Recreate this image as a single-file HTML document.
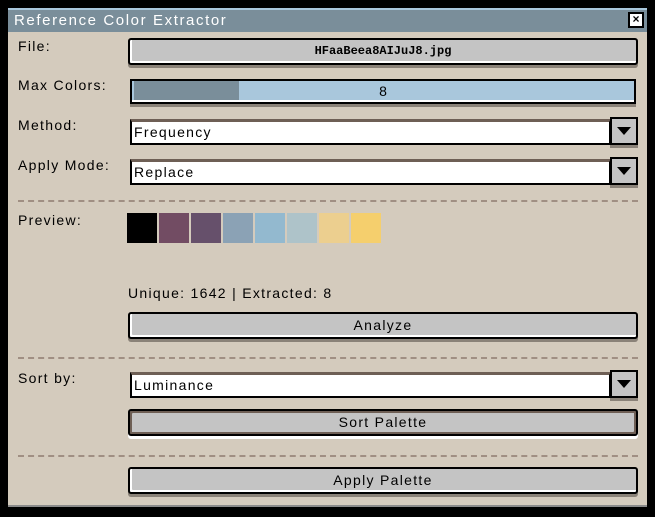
<!DOCTYPE html>
<html><head><meta charset="utf-8"><style>
*{box-sizing:border-box;margin:0;padding:0}
body{width:655px;height:517px;background:#000;position:relative;overflow:hidden;font-family:"Liberation Sans",sans-serif;font-size:14px;color:#000}
.win{position:absolute;left:8px;top:8px;width:639px;height:499px;background:#d4cbbd;border-top:2px solid #a9c7dc;border-bottom:2px solid #8a8a8a}
.title{position:absolute;left:8px;top:10px;width:639px;height:22px;background:#7a8e9a;color:#fff;font-size:15px;line-height:22px;padding-left:6px;letter-spacing:1.6px}
.close{position:absolute;left:628px;top:12px;width:16px;height:16px;background:#fff;border:2px solid #000;font-size:12px;line-height:11px;text-align:center;font-weight:bold}
.lbl{position:absolute;left:18px;font-size:14px;letter-spacing:1.3px}
.btn{position:absolute;left:128px;width:510px;height:27px;background:#c4c4c4;border:2px solid #000;border-radius:3px;box-shadow:inset 2px -2px 0 #fff,0 3px 0 #8a8278;text-align:center;line-height:22px;font-size:14px;letter-spacing:1.3px}
.slider{position:absolute;left:130px;top:79px;width:506px;height:25px;border:2px solid #000;background:#a9c7dc;box-shadow:inset 0 -2px 0 #fff,0 3px 0 #8a8278}
.fill{position:absolute;left:2px;top:0;width:105px;height:19px;background:#7a8e9a}
.dd{position:absolute;left:130px;width:481px;height:26px;background:#fff;border:2px solid #000;border-top:3px solid #6e5f55;line-height:20px;padding-left:2px;font-size:14px;letter-spacing:1.3px}
.arr{position:absolute;left:610px;width:28px;height:28px;background:#c4c4c4;border:2px solid #000;box-shadow:0 3px 0 #8a8278}
.arr:after{content:"";position:absolute;left:5px;top:8px;border-left:7px solid transparent;border-right:7px solid transparent;border-top:8px solid #000}
.sep{position:absolute;left:18px;width:620px;border-top:2px dashed #a08f83}
.sw{position:absolute;top:213px;width:30px;height:30px}
</style></head><body>
<div class="win"></div>
<div class="title">Reference Color Extractor</div>
<div class="close">×</div>

<div class="lbl" style="top:38px">File:</div>
<div class="btn" style="top:38px;font-family:'Liberation Mono',monospace;font-size:12px;font-weight:bold;letter-spacing:0">HFaaBeea8AIJuJ8.jpg</div>

<div class="lbl" style="top:77px">Max Colors:</div>
<div class="slider"><div class="fill"></div><div style="position:absolute;left:0;right:0;top:0;text-align:center;line-height:20px">8</div></div>

<div class="lbl" style="top:117px">Method:</div>
<div class="dd" style="top:119px">Frequency</div><div class="arr" style="top:117px"></div>

<div class="lbl" style="top:157px">Apply Mode:</div>
<div class="dd" style="top:159px">Replace</div><div class="arr" style="top:157px"></div>

<div class="sep" style="top:200px"></div>

<div class="lbl" style="top:212px">Preview:</div>
<div class="sw" style="left:127px;background:#000"></div>
<div class="sw" style="left:159px;background:#724c63"></div>
<div class="sw" style="left:191px;background:#66506b"></div>
<div class="sw" style="left:223px;background:#8ba2b5"></div>
<div class="sw" style="left:255px;background:#93b9cf"></div>
<div class="sw" style="left:287px;background:#aec3c9"></div>
<div class="sw" style="left:319px;background:#eccf8f"></div>
<div class="sw" style="left:351px;background:#f5cf6d"></div>

<div class="lbl" style="left:128px;top:285px">Unique: 1642 | Extracted: 8</div>
<div class="btn" style="top:312px">Analyze</div>

<div class="sep" style="top:357px"></div>

<div class="lbl" style="top:370px">Sort by:</div>
<div class="dd" style="top:372px">Luminance</div><div class="arr" style="top:370px"></div>
<div class="btn" style="top:409px;box-shadow:inset 2px 2px 0 #6e5f55,inset -2px -2px 0 #6e5f55,0 3px 0 #fff">Sort Palette</div>

<div class="sep" style="top:455px"></div>
<div class="btn" style="top:467px">Apply Palette</div>
</body></html>
